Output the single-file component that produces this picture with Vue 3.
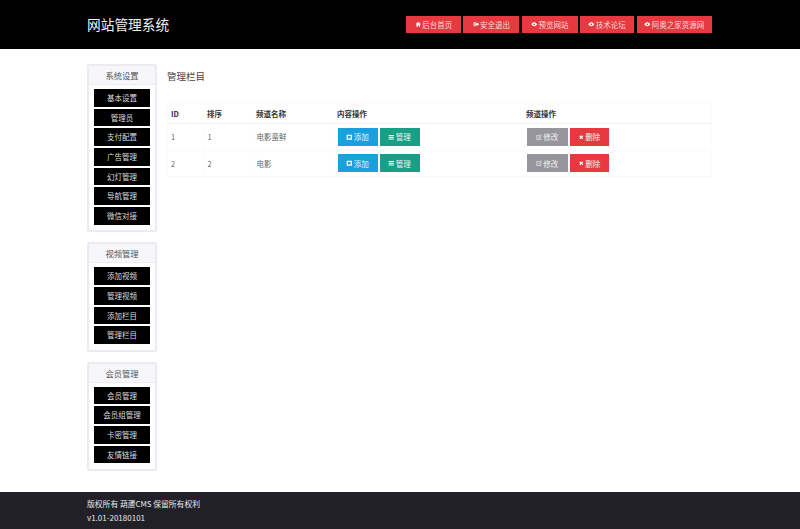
<script setup>
const links = [
  { t: '后台首页', i: 'home', w: 55 },
  { t: '安全退出', i: 'out', w: 56 },
  { t: '预览网站', i: 'eye', w: 56 },
  { t: '技术论坛', i: 'eye', w: 54 },
  { t: '阿奥之家资源网', i: 'eye', w: 75.5 }
]
const groups = [
  { title: '系统设置', items: ['基本设置', '管理员', '支付配置', '广告管理', '幻灯管理', '导航管理', '微信对接'] },
  { title: '视频管理', items: ['添加视频', '管理视频', '添加栏目', '管理栏目'] },
  { title: '会员管理', items: ['会员管理', '会员组管理', '卡密管理', '友情链接'] }
]
const rows = [
  { id: 1, order: 1, name: '电影蛮鲜' },
  { id: 2, order: 2, name: '电影' }
]
</script>

<template>
  <div class="page">
    <header class="top">
      <div class="wrap top-in">
        <div class="brand">网站管理系统</div>
        <nav class="top-links">
          <a v-for="l in links" :key="l.t" class="top-btn" :style="{ width: l.w + 'px' }">
            <svg v-if="l.i === 'home'" class="ic" viewBox="0 0 10 10"><path d="M5 1 .8 5h1.4v4h2V6.5h1.6V9h2V5h1.4z" fill="#fff"/></svg>
            <svg v-else-if="l.i === 'out'" class="ic" viewBox="0 0 10 10"><path d="M1 2h3v1.3H2.300v3.400H4V8H1zM5.500 2 9.500 5l-4 3V6.200H3.500V3.800h2z" fill="#fff"/></svg>
            <svg v-else class="ic" viewBox="0 0 10 10"><path d="M.5 5C2 2.800 3.400 2 5 2s3 .8 4.500 3C8 7.200 6.600 8 5 8S2 7.200.5 5z" fill="#fff"/><circle cx="5" cy="5" r="1.300" fill="#e63a40"/></svg>
            {{ l.t }}
          </a>
        </nav>
      </div>
    </header>

    <main class="wrap body">
      <aside class="side">
        <section v-for="g in groups" :key="g.title" class="panel">
          <h3 class="panel-title">{{ g.title }}</h3>
          <ul class="menu">
            <li v-for="m in g.items" :key="m" class="menu-item">{{ m }}</li>
          </ul>
        </section>
      </aside>

      <section class="content">
        <h2 class="heading">管理栏目</h2>
        <table class="tbl">
          <thead>
            <tr>
              <th class="c1">ID</th>
              <th class="c2">排序</th>
              <th class="c3">频道名称</th>
              <th class="c4">内容操作</th>
              <th>频道操作</th>
            </tr>
          </thead>
          <tbody>
            <tr v-for="r in rows" :key="r.id">
              <td>{{ r.id }}</td>
              <td>{{ r.order }}</td>
              <td>{{ r.name }}</td>
              <td>
                <div class="ops">
                  <a class="btn blue">
                    <svg class="ic" viewBox="0 0 10 10"><path fill-rule="evenodd" d="M1 1h8v8H1zM3 3v4h4V3z" fill="#fff"/></svg>添加
                  </a>
                  <a class="btn green">
                    <svg class="ic" viewBox="0 0 10 10"><path d="M1 1.500h8V3.200H1zM1 4.200h8v1.700H1zM1 6.900h8v1.700H1z" fill="#fff"/></svg>管理
                  </a>
                </div>
              </td>
              <td>
                <div class="ops">
                  <a class="btn gray wide">
                    <svg class="ic" viewBox="0 0 10 10"><path d="M7.500 5.500V8.500H1.200V2.300H5M4 6l.3-1.500L8 .9l1.100 1.100L5.500 5.700z" fill="none" stroke="#fff" stroke-width=".9"/></svg> 修改
                  </a>
                  <a class="btn red">
                    <svg class="ic" viewBox="0 0 10 10"><path d="M2 3.300 3.300 2 5 3.700 6.700 2 8 3.300 6.300 5 8 6.700 6.700 8 5 6.300 3.300 8 2 6.700 3.700 5z" fill="#fff"/></svg> 删除
                  </a>
                </div>
              </td>
            </tr>
          </tbody>
        </table>
      </section>
    </main>

    <footer class="foot">
      <div class="wrap">
        <p class="cr">版权所有 葫蘆CMS 保留所有权利</p>
        <p>v1.01-20180101</p>
      </div>
    </footer>
  </div>
</template>

<style>
html, body { margin: 0; background: #fff; }
</style>

<style scoped>
.page {
  width: 800px;
  height: 529px;
  display: flex;
  flex-direction: column;
  overflow: hidden;
  font-family: "Noto Sans CJK SC", "Liberation Sans", sans-serif;
  font-size: 7.500px;
  color: #555;
  background: #fff;
}
.wrap { width: 625px; margin-left: 87px; }
.top { height: 49px; background: #000; flex: none; }
.top-in { display: flex; align-items: center; justify-content: space-between; height: 49px; }
.brand { color: #f0f0f0; font-size: 13.700px; line-height: 20px; margin-top: -2px; }
.top-links { display: flex; gap: 2.400px; margin-top: -1px; }
.top-btn {
  height: 17px;
  background: #e63a40;
  color: #f6d9da;
  display: flex;
  align-items: center;
  justify-content: center;
  gap: 1px;
  white-space: nowrap;
  font-size: 7.500px;
}
.ic { width: 6.500px; height: 6.500px; flex: none; }
.body { display: flex; flex: 1; gap: 10px; padding-top: 15px; box-sizing: border-box; min-height: 0; }
.side { width: 70px; flex: none; display: flex; flex-direction: column; gap: 10px; }
.panel {
  border: 2px solid #efeaf2;
  border-radius: 2px;
  box-sizing: border-box;
  padding-bottom: 5.500px;
}
.panel-title {
  margin: 0;
  height: 18px;
  line-height: 18px;
  background: #f7f6f9;
  border-bottom: 1px solid #efeaf2;
  text-align: center;
  font-weight: 400;
  font-size: 8.300px;
  color: #555;
}
.menu { list-style: none; margin: 4px 0 0; padding: 0 5px; display: flex; flex-direction: column; gap: 2px; }
.menu-item {
  height: 17.700px;
  line-height: 17.700px;
  background: #000;
  color: #dcdcdc;
  text-align: center;
  font-size: 7.500px;
  white-space: nowrap;
}
.content { flex: 1; min-width: 0; }
.heading { margin: 5px 0 0; font-size: 9.500px; font-weight: 400; line-height: 14px; color: #444; }
.tbl {
  width: 545px;
  margin-top: 19px;
  border-collapse: collapse;
  table-layout: fixed;
  border: 1px solid #fbfafc;
}
.c1 { width: 33px; }
.c2 { width: 46px; }
.c3 { width: 78px; }
.c4 { width: 186px; }
th {
  height: 20px;
  padding: 0 0 0 3px;
  text-align: left;
  font-weight: 700;
  font-size: 7.500px;
  color: #333;
  border-bottom: 1px solid #f3f1f5;
}
td {
  height: 25.500px;
  padding: 0 0 0 3px;
  font-size: 7.500px;
  color: #666;
  border-right: 1px solid #fcfbfd;
  border-bottom: 1px solid #faf9fb;
}
.ops { display: flex; gap: 2px; }
.btn {
  width: 40px;
  height: 18px;
  display: flex;
  align-items: center;
  justify-content: center;
  gap: 1px;
  color: #f2f2f2;
  font-size: 7.500px;
  white-space: nowrap;
}
.wide { width: 41px; }
.blue { background: #1a9fdf; }
.green { background: #16a085; }
.gray { background: #96959b; }
.red { background: #e63a40; width: 39px; }
.foot {
  height: 37px;
  flex: none;
  background: #222027;
  color: #e8e8e8;
  font-size: 8px;
  padding-top: 5px;
  box-sizing: border-box;
}
.foot p { margin: 0; line-height: 14px; }
.foot .cr { font-size: 7.800px; }
</style>
